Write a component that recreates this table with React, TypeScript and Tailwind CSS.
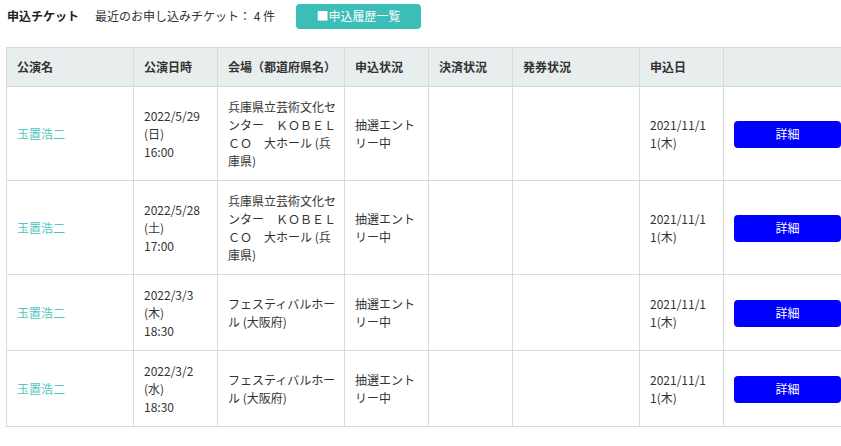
import React from 'react';

interface Ticket {
  id: number;
  name: string;
  date: string[];
  venue: string[];
  status: string[];
  appliedAt: string[];
}

const tickets: Ticket[] = [
  {
    id: 1,
    name: '玉置浩二',
    date: ['2022/5/29', '(日)', '16:00'],
    venue: ['兵庫県立芸術文化セ', 'ンター　ＫＯＢＥＬ', 'ＣＯ　大ホール (兵', '庫県)'],
    status: ['抽選エント', 'リー中'],
    appliedAt: ['2021/11/1', '1(木)'],
  },
  {
    id: 2,
    name: '玉置浩二',
    date: ['2022/5/28', '(土)', '17:00'],
    venue: ['兵庫県立芸術文化セ', 'ンター　ＫＯＢＥＬ', 'ＣＯ　大ホール (兵', '庫県)'],
    status: ['抽選エント', 'リー中'],
    appliedAt: ['2021/11/1', '1(木)'],
  },
  {
    id: 3,
    name: '玉置浩二',
    date: ['2022/3/3', '(木)', '18:30'],
    venue: ['フェスティバルホー', 'ル (大阪府)'],
    status: ['抽選エント', 'リー中'],
    appliedAt: ['2021/11/1', '1(木)'],
  },
  {
    id: 4,
    name: '玉置浩二',
    date: ['2022/3/2', '(水)', '18:30'],
    venue: ['フェスティバルホー', 'ル (大阪府)'],
    status: ['抽選エント', 'リー中'],
    appliedAt: ['2021/11/1', '1(木)'],
  },
];

const headers = ['公演名', '公演日時', '会場（都道府県名）', '申込状況', '決済状況', '発券状況', '申込日', ''];
const widths = [127, 84, 127, 84, 84, 127, 84, 127];

const Lines: React.FC<{ lines: string[] }> = ({ lines }) => (
  <>
    {lines.map((l, i) => (
      <div key={i} className="whitespace-nowrap">{l}</div>
    ))}
  </>
);

export default function App() {
  const cell = 'border border-[#d3dbdb] px-[10px] pt-[11px] pb-[10px] align-middle text-left';

  return (
    <div
      className="w-[841px] h-[446px] overflow-hidden bg-white text-[12px] leading-[18px] text-[#333]"
      style={{ fontFamily: '"Noto Sans CJK JP", "Noto Sans", sans-serif' }}
    >
      <div className="flex items-center h-[31px] pl-[7px] pt-[1px]">
        <span className="font-bold text-[#222]">申込チケット</span>
        <span className="ml-[16px]">最近のお申し込みチケット： 4 件</span>
        <button className="ml-[21px] w-[125px] h-[25px] rounded-[4px] bg-[#3bbdb8] text-white text-[12px]">
          ■申込履歴一覧
        </button>
      </div>

      <div className="pl-[6px] pt-[16px]">
        <table className="table-fixed border-collapse w-[844px]">
          <colgroup>
            {widths.map((w, i) => (
              <col key={i} style={{ width: w }} />
            ))}
          </colgroup>
          <thead>
            <tr className="bg-[#e8eded]">
              {headers.map((h, i) => (
                <th key={i} className="border border-[#d3dbdb] px-[10px] py-[10px] text-left font-bold text-[#333] whitespace-nowrap">
                  {h || '\u00a0'}
                </th>
              ))}
            </tr>
          </thead>
          <tbody>
            {tickets.map((t) => (
              <tr key={t.id}>
                <td className={`${cell} text-[#52c3c6]`}>{t.name}</td>
                <td className={cell}><Lines lines={t.date} /></td>
                <td className={cell}><Lines lines={t.venue} /></td>
                <td className={cell}><Lines lines={t.status} /></td>
                <td className={cell}></td>
                <td className={cell}></td>
                <td className={cell}><Lines lines={t.appliedAt} /></td>
                <td className={cell}>
                  <button className="w-[107px] h-[27px] rounded-[4px] bg-[#0000ff] text-white text-[12px]">
                    詳細
                  </button>
                </td>
              </tr>
            ))}
          </tbody>
        </table>
      </div>
    </div>
  );
}
